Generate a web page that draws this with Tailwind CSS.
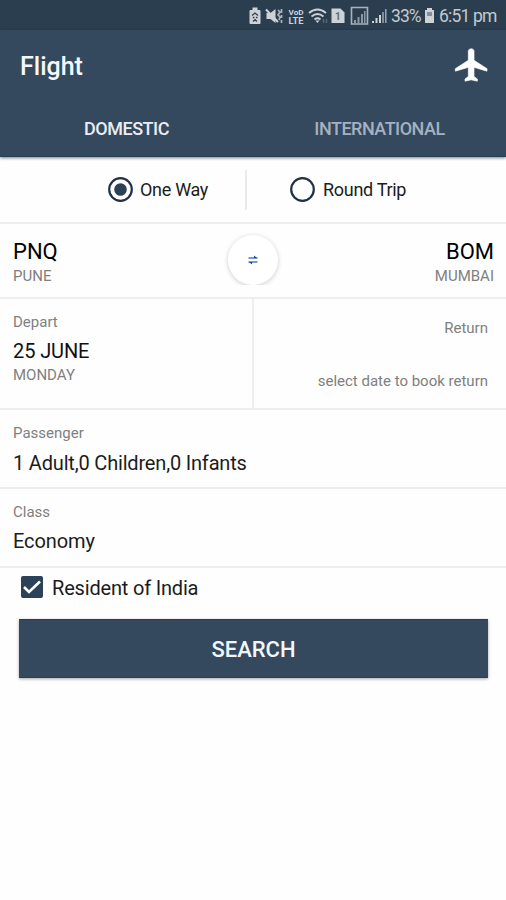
<!DOCTYPE html>
<html lang="en">
<head>
<meta charset="utf-8">
<title>Flight</title>
<script src="https://cdn.jsdelivr.net/npm/@tailwindcss/browser@4"></script>
</head>
<body class="bg-[#fefefe] font-['Roboto','Liberation_Sans',sans-serif] text-[#1c1c1c]">
<div class="w-[506px] h-[900px] flex flex-col overflow-hidden whitespace-nowrap">
  <div class="h-[30px] shrink-0 bg-[#2b3e50] text-[#c3c9ce] flex items-center justify-end pr-[9px] pt-[2px]">
    <svg class="w-[142px] h-[20px] shrink-0" viewBox="0 0 142 20" fill="#cdd2d6">
      <path d="M4.500 1.500h5v2.500h2q1 0 1 1v12q0 1-1 1h-9q-1 0-1-1V5q0-1 1-1h2z"/>
      <path d="M4 9.500L7 7l3 2.500M4.800 11.500h1.600M7.900 11.500h1.600M5 15.500l2-1.800 2 1.800" stroke="#2b3e50" stroke-width="1.300" fill="none"/>
      <path d="M18.500 7h4l5-4v14l-5-4h-4z"/><path d="M18 3.500l12 12.500" stroke="#cdd2d6" stroke-width="2" fill="none"/><path d="M30 4l2 2-2 3 2 2-1 3M33.500 3v4M33.500 9v3M33.500 14v3" stroke="#aab2ba" stroke-width="1.700" fill="none"/>
      <text x="40.500" y="8.500" font-size="8" font-weight="700" textLength="15" lengthAdjust="spacingAndGlyphs">VoD</text>
      <text x="40.500" y="17.500" font-size="9" font-weight="700" textLength="15" lengthAdjust="spacingAndGlyphs">LTE</text>
      <path d="M61 7q8.500-7 17 0M63.500 10.500q6-5 12 0M66.500 13.500q3-2.500 6 0" stroke="#cdd2d6" stroke-width="1.800" fill="none"/><path d="M67.500 14.500h4l-2 2.500z"/><path d="M75.500 13v4M78.500 13v4" stroke="#566675" stroke-width="1.500"/>
      <path d="M83.500 2.500h9l4 4V17h-13z"/><text x="87" y="14" font-size="10" font-weight="700" fill="#5b6b7a">1</text>
      <path d="M103.500 1.500h16v16.500h-16z" fill="none" stroke="#aab2ba" stroke-width="1.600"/><path d="M106 14h2v3h-2zM109.500 11h2v6h-2zM113 8h2v9h-2zM116 5h1.500v12H116z" fill="#8c98a3"/>
      <path d="M124 15h2v2h-2zM127.500 12h2v5h-2zM131 9h2v8h-2z"/><path d="M134.300 6h1.500v11h-1.500zM137 3h1.500v14H137z" fill="#9ba5af"/>
    </svg>
    <span class="text-[17.5px] leading-5 w-[30px] ml-[1px] tracking-[-0.9px]">33%</span>
    <svg class="w-[11px] h-[18px] ml-[3px] shrink-0" viewBox="0 0 11 18"><path d="M3 1h5v2h2v13H1V3h2z" fill="#cdd2d6"/><path d="M3 5h5v4H3z" fill="#83909c"/></svg>
    <span class="text-[17.5px] leading-5 ml-[4px] w-[58px] tracking-[-0.8px]">6:51 pm</span>
  </div>
  <header class="h-[127px] shrink-0 bg-[#34495e] shadow-[0_1px_3px_rgba(0,0,0,0.5)] flex flex-col border-b border-[#263f58]">
    <div class="h-[72px] flex items-center justify-between pl-[20px] pr-[14px]">
      <h1 class="text-[25px] leading-[30px] font-medium text-[#f4f8fc] pt-px">Flight</h1>
      <svg class="w-[40px] h-[40px] -mt-[3px]" viewBox="0 0 24 24" fill="#fff" stroke="#fff" stroke-width="0.4" stroke-linejoin="round"><path d="M21 15.700v-1.500l-7.800-5V3.700c0-.8-.7-1.400-1.700-1.400s-1.700.6-1.700 1.400v5.500L2 14.200v1.500l7.800-2.300v5.500l-2 1.500v1.300l3.700-.8 3.700.8v-1.300l-2-1.500v-5.500l7.800 2.300z"/></svg>
    </div>
    <nav class="flex-1 grid grid-cols-2 text-center text-[18px] leading-[54px] font-medium tracking-[-0.5px]">
      <span class="text-[#e9eef5]">DOMESTIC</span>
      <span class="text-[#a5b1c0]">INTERNATIONAL</span>
    </nav>
  </header>
  <div class="h-[67px] shrink-0 border-b-2 border-[#eeeeee] flex items-center text-[18px] leading-[22px] tracking-[-0.3px]">
    <div class="w-[247px] h-[40px] border-r-2 border-[#eaeaea] flex items-center pl-[108px]">
      <svg class="w-[25px] h-[25px]" viewBox="0 0 25 25"><circle cx="12.500" cy="12.500" r="11.300" fill="none" stroke="#1f3047" stroke-width="2.200"/><circle cx="12.500" cy="12.500" r="6.300" fill="#2c4056"/></svg>
      <span class="ml-[7px] pt-px">One Way</span>
    </div>
    <div class="flex items-center pl-[43px]">
      <svg class="w-[25px] h-[25px]" viewBox="0 0 25 25"><circle cx="12.500" cy="12.500" r="11.300" fill="none" stroke="#1f3047" stroke-width="2.200"/></svg>
      <span class="ml-[8px] pt-px">Round Trip</span>
    </div>
  </div>
  <div class="h-[75px] shrink-0 border-b-2 border-[#eeeeee] pl-[13px] pr-[12px] flex justify-between">
    <div class="w-[179px] pt-[14px]"><div class="text-[22px] leading-[28px] text-black">PNQ</div><div class="text-[15px] leading-[20px] text-[#808080]">PUNE</div></div>
    <div class="w-[70px] h-[61px] overflow-hidden flex justify-center pt-[11px]">
      <div class="w-[50px] h-[50px] rounded-full bg-white shadow-[0_1px_5px_rgba(0,0,0,0.2)] flex items-center justify-center">
        <svg class="w-[12px] h-[12px]" viewBox="0 0 12 12"><path d="M1.500 4h9M10.500 8h-9" stroke="#4c7cc0" stroke-width="1.500"/><path d="M7 1.500L10 4H7zM5 10.500L2 8h3z" fill="#20409a"/></svg>
      </div>
    </div>
    <div class="w-[180px] pt-[14px] text-right"><div class="text-[22px] leading-[28px] text-black">BOM</div><div class="text-[15px] leading-[20px] text-[#808080]">MUMBAI</div></div>
  </div>
  <div class="h-[111px] shrink-0 border-b-2 border-[#eeeeee] grid grid-cols-[254px_252px] text-[15px] leading-[20px] text-[#808080]">
    <div class="pl-[13px] pt-[13px] border-r-2 border-[#eeeeee]"><div>Depart</div><div class="text-[20px] leading-[26px] mt-[6px] text-[#111] tracking-[-0.1px]">25 JUNE</div><div class="mt-[1px]">MONDAY</div></div>
    <div class="pr-[18px] pt-[19px] text-right"><div>Return</div><div class="mt-[33px]">select date to book return</div></div>
  </div>
  <div class="h-[79px] shrink-0 border-b-2 border-[#eeeeee] pl-[13px] pt-[13px]"><div class="text-[15px] leading-[20px] text-[#808080]">Passenger</div><div class="text-[20px] leading-[26px] mt-[7px] tracking-[-0.18px]">1 Adult,0 Children,0 Infants</div></div>
  <div class="h-[79px] shrink-0 border-b-2 border-[#eeeeee] pl-[13px] pt-[13px]"><div class="text-[15px] leading-[20px] text-[#808080]">Class</div><div class="text-[20px] leading-[26px] mt-[6px] tracking-[-0.1px]">Economy</div></div>
  <div class="h-[51px] shrink-0 flex items-start pt-[7px] pl-[21px]">
    <svg class="w-[22px] h-[22px] mt-[1px]" viewBox="0 0 22 22"><rect width="22" height="22" rx="2" fill="#2c4259"/><path d="M3 11l5 5L19 5.500" fill="none" stroke="#fff" stroke-width="2.600"/></svg>
    <span class="text-[20px] leading-[26px] ml-[9px] tracking-[-0.18px]">Resident of India</span>
  </div>
  <button class="ml-[19px] mr-[18px] h-[59px] shrink-0 bg-[#34495e] border-y border-[#263f58] shadow-[0_1px_3px_rgba(0,0,0,0.35)] text-[22px] font-medium text-[#f2f6fb] pt-[2px]">SEARCH</button>
</div>
</body>
</html>
